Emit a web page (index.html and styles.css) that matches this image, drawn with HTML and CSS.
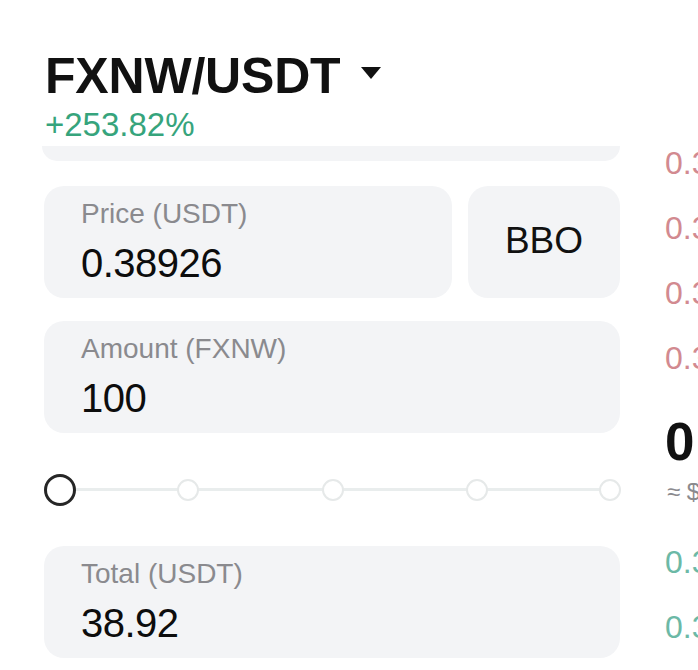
FILE: index.html
```html
<!DOCTYPE html>
<html lang="en">
<head>
<meta charset="utf-8">
<title>FXNW/USDT</title>
<link rel="stylesheet" href="styles.css">
</head>
<body>
<div class="page">
  <div class="left">
    <header class="header">
      <div class="pair">
        <span class="pair-name">FXNW/USDT</span>
        <svg class="caret" width="20" height="14" viewBox="0 0 20 14"><polygon points="0,1 20,1 10,13" fill="#111"/></svg>
      </div>
      <div class="change">+253.82%</div>
    </header>
    <div class="card-stub"></div>
    <div class="price-row">
      <div class="field field-price">
        <div class="label">Price (USDT)</div>
        <div class="value">0.38926</div>
      </div>
      <div class="bbo">BBO</div>
    </div>
    <div class="field field-amount">
      <div class="label">Amount (FXNW)</div>
      <div class="value">100</div>
    </div>
    <div class="slider">
      <div class="track">
        <span class="dot dot-0"></span>
        <span class="dot dot-25"></span>
        <span class="dot dot-50"></span>
        <span class="dot dot-75"></span>
        <span class="dot dot-100"></span>
        <span class="knob"></span>
      </div>
    </div>
    <div class="field field-total">
      <div class="label">Total (USDT)</div>
      <div class="value">38.92</div>
    </div>
  </div>
  <div class="book">
    <div class="ask">0.38990</div>
    <div class="ask">0.38970</div>
    <div class="ask">0.38950</div>
    <div class="ask">0.38930</div>
    <div class="last">0.38926</div>
    <div class="approx">≈ $0.38926</div>
    <div class="bid">0.38920</div>
    <div class="bid">0.38900</div>
  </div>
</div>
</body>
</html>
```

FILE: styles.css
```css
html, body {
  margin: 0;
  padding: 0;
  background: #ffffff;
  overflow: hidden;
}
body {
  width: 698px;
  height: 670px;
  font-family: "Liberation Sans", Arial, sans-serif;
  color: #111;
}
.page {
  display: flex;
  gap: 45px;
  padding-left: 44px;
  width: 1000px;
}
.left {
  width: 576px;
  flex: none;
  display: flex;
  flex-direction: column;
}
.header {
  padding-top: 48px;
}
.pair {
  display: flex;
  align-items: center;
  gap: 21px;
  height: 56px;
}
.pair-name {
  font-size: 50px;
  line-height: 56px;
  font-weight: 700;
  letter-spacing: -0.2px;
  margin-left: 1px;
}
.caret {
  display: block;
  margin-top: -6px;
}
.change {
  margin-top: 2px;
  font-size: 33px;
  line-height: 38px;
  color: #36a47c;
  margin-left: 1px;
}
.card-stub {
  margin-top: 2px;
  height: 15px;
  background: #f3f4f6;
  border-radius: 0 0 20px 20px;
  margin-left: -2px;
}
.price-row {
  margin-top: 25px;
  display: flex;
  gap: 16px;
}
.field {
  background: #f3f4f6;
  border-radius: 20px;
  height: 112px;
  box-sizing: border-box;
  padding: 11px 0 0 37px;
}
.field-price {
  width: 408px;
}
.bbo {
  flex: 1;
  height: 112px;
  background: #f3f4f6;
  border-radius: 20px;
  display: flex;
  align-items: center;
  justify-content: center;
  font-size: 37px;
  padding-bottom: 2px;
  box-sizing: border-box;
  color: #111;
}
.label {
  font-size: 28px;
  line-height: 34px;
  color: #8a8a8e;
}
.value {
  margin-top: 9px;
  font-size: 40px;
  line-height: 46px;
  color: #0d0d0d;
  letter-spacing: -0.5px;
}
.field-amount {
  margin-top: 23px;
}
.slider {
  height: 113px;
  display: flex;
  align-items: center;
}
.track {
  position: relative;
  margin-left: 16px;
  width: 550px;
  height: 3px;
  background: #e9eded;
}
.dot {
  position: absolute;
  top: 50%;
  width: 18px;
  height: 18px;
  border: 2px solid #e6e9e9;
  background: #fff;
  border-radius: 50%;
  transform: translate(-50%, -50%);
}
.dot-0 { left: 0; }
.dot-25 { left: 23.3%; }
.dot-50 { left: 49.6%; }
.dot-75 { left: 75.8%; }
.dot-100 { left: 100%; }
.knob {
  position: absolute;
  top: 50%;
  left: 0;
  width: 26px;
  height: 26px;
  border: 3.5px solid #262626;
  background: #fff;
  border-radius: 50%;
  transform: translate(-50%, -50%);
}
.book {
  flex: none;
  padding-top: 131px;
  display: flex;
  flex-direction: column;
}
.ask, .bid {
  font-size: 32px;
  line-height: 65px;
  height: 65px;
}
.ask {
  color: #d28a90;
}
.bid {
  color: #6cb9a6;
}
.last {
  margin-top: 16px;
  font-size: 53px;
  font-weight: 700;
  line-height: 70px;
  color: #111;
}
.approx {
  font-size: 24px;
  line-height: 30px;
  color: #8a8a8e;
  margin-bottom: 23px;
  margin-left: 2px;
}
```
